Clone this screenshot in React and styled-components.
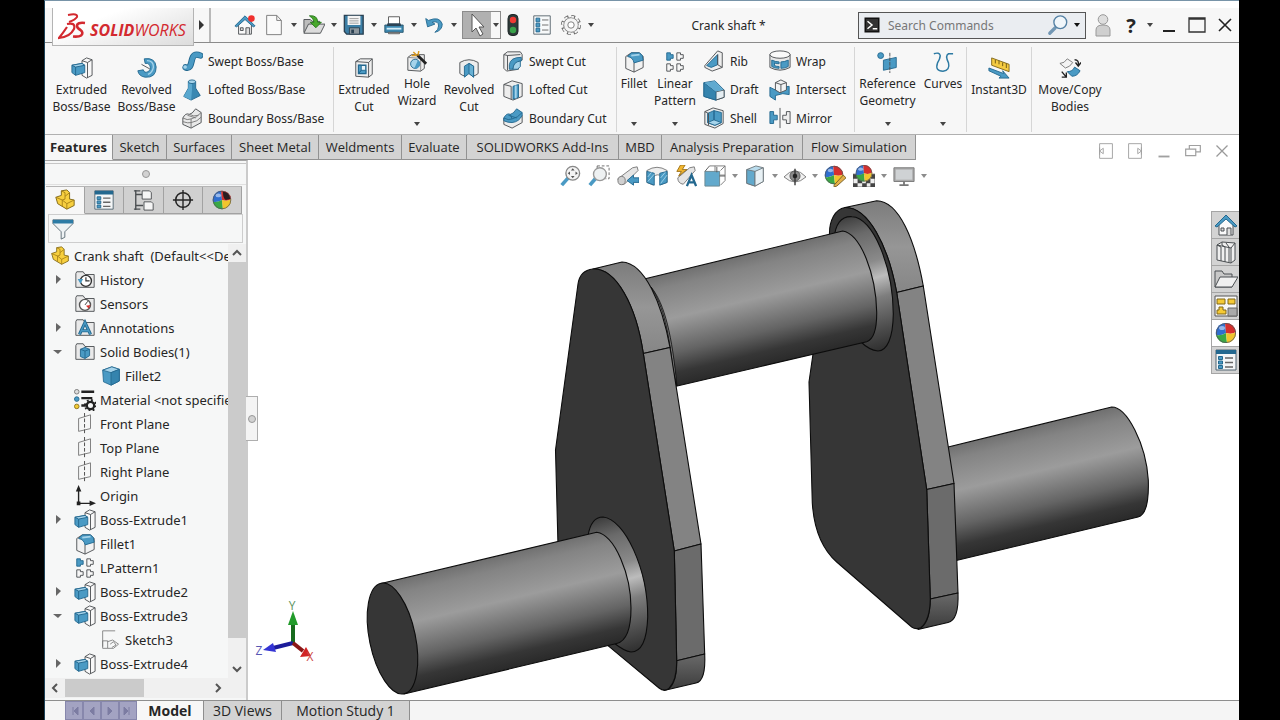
import React from "react";
import styled, { createGlobalStyle } from "styled-components";

const GlobalStyle = createGlobalStyle`
  * {
    box-sizing: border-box;
  }
  body {
    margin: 0;
    background: #000;
    color: #262626;
    font-family: "Noto Sans", "Open Sans", sans-serif;
    font-size: 13px;
  }
  button, input {
    font: inherit;
    color: inherit;
    margin: 0;
    padding: 0;
    border: 0;
    background: none;
  }
  h1, ul {
    margin: 0;
    padding: 0;
    font: inherit;
    list-style: none;
  }
`;

const Window = styled.div`
  display: flex;
  flex-direction: column;
  height: 100vh;
  margin: 0 41px 0 44px;
  background: #fff;
  border-top: 1px solid #7894a8;
  border-left: 1px solid #1d4258;
  overflow: hidden;
`;

const TitleBar = styled.header`
  display: flex;
  align-items: center;
  height: 35px;
  margin-top: 7px;
  background: #f7f7f7;
  border-bottom: 1px solid #8b8b8b;
  flex-shrink: 0;
`;

const Logo = styled.a`
  display: flex;
  align-items: center;
  align-self: flex-start;
  gap: 3px;
  width: 142px;
  height: 38px;
  margin-left: 7px;
  padding-left: 5px;
  background: linear-gradient(160deg, #fff 30%, #dcdcdc);
  border: 1px solid #b4b4b4;
  border-top: 0;
  color: #d3292f;
  text-decoration: none;
  z-index: 1;
`;

const LogoText = styled.span`
  font-family: "Open Sans", sans-serif;
  font-size: 16px;
  font-style: italic;
  line-height: 20px;
  margin-top: 6px;
`;

const MenuArrow = styled.button`
  display: flex;
  align-items: center;
  justify-content: center;
  width: 17px;
  height: 34px;
  border-right: 2px solid #b9b9b9;
`;

const QuickTools = styled.div`
  display: flex;
  align-items: center;
  margin-left: 22px;
`;

const ToolButton = styled.button`
  display: flex;
  align-items: center;
  justify-content: center;
  width: 24px;
  height: 24px;
  margin-right: ${(props) => props.$space || 0}px;
`;

const ArrowButton = styled.button`
  display: flex;
  align-items: center;
  justify-content: center;
  width: 16px;
  height: 24px;
`;

const SelectTool = styled.div`
  display: flex;
  width: 39px;
  height: 28px;
  border: 1px solid #8c8c8c;

  button {
    height: 26px;
  }
  button:first-child {
    width: 28px;
    background: #b1b1b1;
  }
  button:last-child {
    width: 9px;
  }
`;

const DocTitle = styled.h1`
  flex: 1;
  text-align: center;
  font-size: 12px;
`;

const Search = styled.label`
  display: flex;
  align-items: center;
  width: 228px;
  height: 27px;
  padding: 0 0 0 4px;
  background: #eaedf1;
  border: 1px solid #555;
  font-size: 12px;

  input {
    flex: 1;
    min-width: 0;
    margin-left: 7px;
    outline: 0;
  }
  input::placeholder {
    color: #777;
    opacity: 1;
  }
`;

const WindowControls = styled.div`
  display: flex;
  align-items: center;
  margin-left: 3px;
`;

const ControlButton = styled(ToolButton)`
  width: ${(props) => props.$width || 28}px;
  font-size: 20px;
  font-weight: 700;
`;

const Ribbon = styled.section`
  display: flex;
  height: 92px;
  flex-shrink: 0;
  background: #f7f7f7;
  border-bottom: 1px solid #b0b0b0;
  font-size: 12px;
`;

const RibbonGroup = styled.div`
  display: flex;
  margin: 4px 0 2px;
  padding-left: ${(props) => props.$indent || 0}px;
  border-right: ${(props) => (props.$last ? 0 : 1)}px solid #d6d6d6;
`;

const BigButton = styled.button`
  display: flex;
  flex-direction: column;
  align-items: center;
  width: ${(props) => props.$width}px;
  padding-top: ${(props) => (props.$menu ? 4 : 10)}px;
  line-height: 17px;
  white-space: nowrap;

  span {
    margin-top: 2px;
    white-space: pre-line;
  }
  > svg:last-child {
    margin: auto 0 6px;
  }
`;

const SmallColumn = styled.div`
  display: flex;
  flex-direction: column;
  justify-content: space-between;
  width: ${(props) => props.$width}px;
  padding-left: ${(props) => props.$indent}px;
`;

const SmallButton = styled.button`
  display: flex;
  align-items: center;
  gap: 5px;
  height: 28px;
  white-space: nowrap;
`;

const TabRow = styled.nav`
  display: flex;
  height: 25px;
  flex-shrink: 0;
`;

const Tab = styled.button`
  width: ${(props) => props.$width}px;
  height: 25px;
  background: ${(props) => (props.$active ? "#f7f7f7" : "#d3d3d3")};
  border-right: 1px solid #929292;
  border-bottom: 1px solid ${(props) => (props.$active ? "#f7f7f7" : "#929292")};
  font-family: "Open Sans", sans-serif;
  font-weight: ${(props) => (props.$active ? 700 : 400)};
  white-space: nowrap;
`;

const DocControls = styled.div`
  display: flex;
  align-items: center;
  gap: 5px;
  margin: 7px 5px 0 auto;
`;

const Work = styled.main`
  display: flex;
  flex: 1;
  min-height: 0;
`;

const Panel = styled.aside`
  display: flex;
  flex-direction: column;
  position: relative;
  width: 203px;
  flex-shrink: 0;
  background: #f6f7f7;
  border-top: 1px solid #a5a5a5;
  border-right: 2px solid #cbcbcb;
`;

const Grip = styled.div`
  display: flex;
  align-items: center;
  justify-content: center;
  height: 22px;
  margin-top: 2px;
  border-top: 1px solid #c6c6c6;
  border-bottom: 1px solid #e0e0e0;
`;

const Dot = styled.span`
  width: 8px;
  height: 8px;
  border: 1px solid #989898;
  border-radius: 50%;
  background: #d2d2d2;
`;

const PanelTabs = styled.div`
  display: flex;
  height: 28px;
  margin: 1px 4px 0 1px;
  border-top: 1px solid #b5b5b5;
`;

const PanelTab = styled.button`
  display: flex;
  flex: 1;
  align-items: center;
  justify-content: center;
  background: ${(props) => (props.$active ? "#f7f7f7" : "#d0d0d0")};
  border-right: 1px solid #a2a2a2;
  border-bottom: 1px solid ${(props) => (props.$active ? "#f7f7f7" : "#a2a2a2")};
`;

const Filter = styled.label`
  display: flex;
  align-items: center;
  height: 29px;
  margin: 0 3px 1px;
  padding-left: 3px;
  border: 1px solid #cdcdcd;

  input {
    flex: 1;
    min-width: 0;
    outline: 0;
  }
`;

const TreeArea = styled.div`
  display: flex;
  flex: 1;
  min-height: 0;
`;

const Tree = styled.ul`
  flex: 1;
  min-width: 0;
  overflow: hidden;
`;

const TreeRow = styled.li`
  display: flex;
  align-items: center;
  height: 24px;
  padding-left: ${(props) => [5, 7, 56][props.$level]}px;
  white-space: pre;

  > svg {
    flex-shrink: 0;
    margin-right: 4px;
  }
`;

const Expander = styled.button`
  display: flex;
  flex-shrink: 0;
  justify-content: center;
  width: 12px;
  margin-right: 10px;
  visibility: ${(props) => (props.$hidden ? "hidden" : "visible")};
`;

const VScroll = styled.div`
  display: flex;
  flex-direction: column;
  justify-content: space-between;
  width: 18px;
  background: #f0f0f0;

  button {
    display: flex;
    align-items: center;
    justify-content: center;
    height: 18px;
  }
`;

const VThumb = styled.div`
  flex: 1;
  margin-bottom: 22px;
  background: #cbcbcb;
`;

const HScroll = styled.div`
  display: flex;
  align-items: center;
  height: 20px;
  margin-bottom: 2px;
  padding-right: 18px;
  background: #f0f0f0;

  button {
    display: flex;
    align-items: center;
    justify-content: center;
    width: 20px;
    height: 20px;
  }
`;

const HThumb = styled.div`
  width: 79px;
  height: 18px;
  margin-right: auto;
  background: #cbcbcb;
`;

/* flyout handle that sits on the panel's outer edge */
const PanelHandle = styled.button`
  display: flex;
  align-items: center;
  justify-content: center;
  position: absolute;
  top: 235px;
  right: -12px;
  width: 12px;
  height: 45px;
  background: #f4f4f4;
  border: 1px solid #aeaeae;
  border-left: 0;
  z-index: 1;
`;

const Viewport = styled.section`
  position: relative;
  flex: 1;
  min-width: 0;

  > svg {
    display: block;
    width: 100%;
    height: 100%;
  }
`;

const HeadsUp = styled.div`
  position: absolute;
  top: 4px;
  left: 0;
  right: 0;
  display: flex;
  justify-content: center;
  padding-left: 2px;
`;

const TaskPane = styled.div`
  position: absolute;
  top: 51px;
  right: 0;
  width: 28px;
  border: 1px solid #a5a5a5;
  border-width: 1px 0 0 1px;
`;

const TaskButton = styled.button`
  display: flex;
  align-items: center;
  justify-content: center;
  width: 27px;
  height: 27px;
  background: ${(props) => (props.$active ? "#fff" : "#d3d3d3")};
  border-bottom: 1px solid #a5a5a5;
`;

const BottomBar = styled.footer`
  display: flex;
  height: 20px;
  flex-shrink: 0;
  background: #f5f5f5;
  border-top: 1px solid #8e8e8e;
`;

const NavButtons = styled.div`
  display: flex;
  margin-left: 20px;

  button {
    display: flex;
    align-items: center;
    justify-content: center;
    width: 18px;
    background: #a3a3c2;
    border: 1px solid #8787ac;
  }
`;

const SheetTab = styled.button`
  width: ${(props) => props.$width}px;
  background: ${(props) => (props.$active ? "#f7f7f7" : "#d3d3d3")};
  border-right: 1px solid #8e8e8e;
  font-family: "Open Sans", sans-serif;
  font-size: 14px;
  line-height: 19px;
  font-weight: ${(props) => (props.$active ? 700 : 400)};
  white-space: nowrap;
`;

const line = "#4b4f52";
const blue = "#4a9ac4";
const deep = "#23688f";
const pale = "#a5d3ea";

const Ball = ({ x = 12, y = 12, r = 10 }) => (
  <g transform={`translate(${x} ${y}) scale(${r / 10})`} stroke="none">
    <path d="M0 0L-1-10A10 10 0 0 0-10 2Q-5 3 0 0z" fill="#2f6fd0" />
    <path d="M0 0L-1-10A10 10 0 0 1 10-1Q6 2 0 0z" fill="#d5302e" />
    <path d="M0 0Q-5 3-10 2A10 10 0 0 0 1 10z" fill="#3aa845" />
    <path d="M0 0Q6 2 10-1A10 10 0 0 1 1 10z" fill="#f2c52c" />
    <circle r="9.6" fill="none" stroke="#555" strokeWidth=".8" />
    <ellipse cx="-4" cy="-5" rx="3" ry="2" fill="#fff" opacity=".5" />
  </g>
);

const Folder = ({ children }) => (
  <>
    <path d="M2 5V20H22V6H12L10 3H3z" fill="#e9e9e9" stroke={line} />
    {children}
  </>
);

const House = () => (
  <>
    <path d="M5 11V22H19V11L12 4z" fill="#fafafa" stroke={line} />
    <path d="M13 22V15H17V22M7 15h3v3H7z" fill="#ddd" stroke={line} />
    <path d="M1 13L12 2L23 13L21 14L12 6L3 14z" fill={blue} stroke={deep} />
  </>
);

const pictures = {
  home: <House />,
  homeAlert: (
    <>
      <House />
      <circle cx="19" cy="5" r="3.6" fill="#f0302e" />
    </>
  ),
  file: (
    <path d="M4 1.500H15L20 7V22.500H4zM15 1.500V7H20" fill="#fafafa" stroke="#777" />
  ),
  open: (
    <>
      <path d="M1 6H8L10 8H18V20H1z" fill="#bdbdbd" stroke={line} />
      <path d="M1 21L6 11H24L19 21z" fill="#dcdcdc" stroke={line} />
      <path d="M7 2Q16 1 16 9H20L14 15L8 9H12Q12 5 7 2z" fill="#48a82c" stroke="#25761a" />
    </>
  ),
  save: (
    <>
      <path d="M1.500 1.500H22V22H4L1.500 19z" fill="#3c7fa6" stroke="#2b4253" strokeWidth="1.500" />
      <path d="M5 2H19V12H5z" fill="#f4f4f4" />
      <path d="M7 5h10M7 7.500h10M7 10h10" stroke="#999" />
      <path d="M7 15H18V22H7z" fill="#8d979e" stroke="#2b4253" />
      <path d="M9 17h3v4H9z" fill="#2b4253" />
    </>
  ),
  print: (
    <>
      <path d="M6 3H18V12H6z" fill="#fff" stroke="#555" />
      <path d="M2 12H22V20H2z" fill="#3d89b1" stroke="#29566e" />
      <path d="M5 10H19L20 13H4z" fill="#2c4456" />
      <path d="M4 16H20" stroke="#d5edf8" strokeWidth="2" />
      <path d="M6 20H18V21.500H6z" fill="#eee" stroke="#555" />
    </>
  ),
  undo: (
    <path
      d="M3 5L5 14L13 11L10 9Q17 7 17 13Q17 17 13 20Q21 18 21 11Q18 2 6 7z"
      fill={blue}
      stroke={deep}
    />
  ),
  cursor: <path d="M7 1V19L11 15L15 23L18 21L14 14H19z" fill="#fff" stroke="#555" />,
  signal: (
    <>
      <rect x="7" y="1.500" width="10" height="21" rx="4" fill="#2f3b3a" stroke="#1f2928" />
      <circle cx="12" cy="7" r="3.200" fill="#f03b34" />
      <circle cx="12" cy="17" r="3.200" fill="#39a34a" />
    </>
  ),
  options: (
    <>
      <path d="M3 2H21V22H3z" fill="#f7f9fa" stroke="#57646c" />
      <path d="M5.500 4.500h4v4h-4zM5.500 10h4v4h-4zM5.500 15.500h4v4h-4z" fill={blue} stroke={deep} />
      <path d="M12 6.500h7M12 12h7M12 17.500h7" stroke="#666" />
    </>
  ),
  gear: (
    <>
      <circle cx="12" cy="12" r="9.500" fill="none" stroke="#666" strokeWidth="3" strokeDasharray="4.300 3.160" />
      <circle cx="12" cy="12" r="8" fill="#f5f5f5" stroke="#777" />
      <circle cx="12" cy="12" r="9.200" fill="none" stroke="#f5f5f5" strokeWidth="2" strokeDasharray="3 4.230" />
      <circle cx="12" cy="12" r="3.500" fill="#fff" stroke="#777" />
    </>
  ),
  terminal: (
    <>
      <path d="M3 3H21V21H3z" fill="#333" stroke="#111" strokeWidth="2" />
      <path d="M6 7L12 12L6 17M13 17H19" fill="none" stroke="#fff" strokeWidth="2" />
    </>
  ),
  search: (
    <>
      <path d="M9 15L3 21" stroke="#7297b4" strokeWidth="3.500" strokeLinecap="round" />
      <circle cx="14.500" cy="9" r="7" fill="#f0f6fa" stroke="#5481a4" strokeWidth="1.500" />
    </>
  ),
  user: (
    <>
      <path d="M5 23V17Q5 12 12 12Q19 12 19 17V23z" fill="#cfcfcf" stroke="#999" />
      <circle cx="12" cy="6.500" r="4.800" fill="#dedede" stroke="#999" />
    </>
  ),
  minimize: <path d="M6 18H18" stroke="#222" strokeWidth="2" />,
  maximize: <path d="M4 5H20V19H4zM4 6H20" fill="none" stroke="#333" strokeWidth="1.300" />,
  close: <path d="M6 6L18 18M18 6L6 18" stroke="#222" strokeWidth="1.600" />,
  boss: (
    <>
      <path d="M12 4L17 1L23 3V20L17 23L12 20z" fill="#f8f8f8" stroke={line} />
      <path d="M12 4L18 6V22.500M18 6L23 3" fill="none" stroke={line} />
      <path d="M1 9L12 7L15 9V17L5 20L1 17z" fill={blue} stroke={deep} />
      <path d="M1 9L5 11L15 9L12 7z" fill={pale} stroke={deep} />
      <path d="M5 11V20" stroke={deep} />
    </>
  ),
  revolve: (
    <>
      <path d="M9 2Q21 0 22 11Q22 23 10 22Q3 21 2 15L8 14Q9 18 13 16Q17 14 15 9Q13 6 10 7z" fill={blue} stroke={deep} />
      <path d="M12 4Q19 4 19 11Q18 17 13 19" fill="none" stroke={pale} strokeWidth="1.500" />
      <path d="M6 8L15 13" stroke={line} />
    </>
  ),
  sweep: (
    <>
      <path
        d="M5 19C14 22 9 5 17 5Q19 5 21 6"
        fill="none"
        stroke={deep}
        strokeWidth="7"
        strokeLinecap="round"
      />
      <path
        d="M5 19C14 22 9 5 17 5Q19 5 21 6"
        fill="none"
        stroke={blue}
        strokeWidth="5"
        strokeLinecap="round"
      />
      <circle cx="4.500" cy="18.500" r="2" fill={pale} />
    </>
  ),
  loft: (
    <>
      <path d="M8 3V10L3 19L11 23L21 18L16 10V3z" fill="#3a88b2" stroke={deep} />
      <path d="M8 4V10L3 19L11 23L12 12V5z" fill="#5aa8cf" />
      <ellipse cx="12" cy="3" rx="4" ry="2" fill={pale} stroke={deep} />
    </>
  ),
  boundary: (
    <>
      <path d="M2 12Q5 6 9 8Q12 8 16 2L22 6V17L11 23L2 19z" fill="#e9e9e9" stroke={line} />
      <path d="M2 12Q7 15 11 13Q17 12 22 6M11 13V23M2 16Q8 18 11 17Q18 16 22 11M7 9L16 12M9 8Q14 11 19 9" fill="none" stroke="#777" />
    </>
  ),
  extrudeCut: (
    <>
      <path d="M3 5L8 2H21V19L17 22L3 21z" fill="#efefef" stroke={line} />
      <path d="M3 5L17 6V22M17 6L21 2" fill="none" stroke={line} />
      <path d="M6 9H14V18H6z" fill="#e8f4fa" stroke={deep} strokeWidth="1.500" />
      <path d="M6 18L9 14.500V9H6zM9 14.500H14V18H6z" fill={blue} stroke={deep} />
    </>
  ),
  hole: (
    <>
      <path d="M2 7L6 4H20V19L16 22L2 21z" fill="#ececec" stroke={line} />
      <path d="M2 7L16 8V22" fill="none" stroke="#888" />
      <circle cx="10" cy="14" r="5" fill={pale} stroke={deep} />
      <path d="M13 10A5 5 0 0 1 9 19z" fill={blue} />
      <path d="M12 4L22 14" stroke="#222" strokeWidth="3" />
      <path d="M8 1L12 5M14 0L13 5M6 5H11" stroke="#d99a20" strokeWidth="1.600" />
    </>
  ),
  revolveCut: (
    <>
      <path d="M2 6Q12 0 22 6V18Q20 20 16 21L12 15L8 21Q4 20 2 18z" fill="#ededed" stroke={line} />
      <path d="M12 7L7 10V22L12 18L17 22V10z" fill={blue} stroke={deep} />
      <path d="M12 7V18L17 22V10z" fill="#69b1d4" stroke={deep} />
    </>
  ),
  sweepCut: (
    <>
      <path d="M2 5L6 2H20L22 5V11L18 12V21L5 23L2 20z" fill="#ededed" stroke={line} />
      <path d="M2 5L6 6V22M6 6L20 5" fill="none" stroke={line} />
      <path d="M8 21V16Q9 8 21 8V12Q13 12 12 21z" fill={blue} stroke={deep} />
      <path d="M12 21Q12 13 20 12V18L17 21z" fill={pale} stroke={deep} />
    </>
  ),
  loftCut: (
    <>
      <path d="M2 6L11 2L22 5V19L12 23L2 19z" fill="#ededed" stroke={line} />
      <path d="M2 6L10 8V22" fill="none" stroke={line} />
      <path d="M12 8L18 6V20L12 22z" fill={blue} stroke={deep} />
      <path d="M15 7V21" stroke={pale} strokeWidth="2" />
    </>
  ),
  boundaryCut: (
    <>
      <path d="M2 12L22 9V17L11 23L2 19z" fill="#ededed" stroke={line} />
      <path d="M2 12Q5 6 9 8Q12 8 16 2L22 6V9Q19 16 11 17Q6 17 2 15z" fill={blue} stroke={deep} />
      <path d="M2 12Q7 15 11 13Q17 12 22 6M7 9L16 12M9 8L11 13" fill="none" stroke={deep} />
    </>
  ),
  fillet: (
    <>
      <path d="M3 6L9 2H18L22 6V18L12 23L3 19z" fill="#f2f2f2" stroke={line} />
      <path d="M5 6L9 2H18Q22 4 22 10L12 13Q11 7 5 6z" fill={blue} stroke={deep} />
      <path d="M12 13V23" stroke={line} />
      <path d="M9 5L18 4" stroke={pale} strokeWidth="2" />
    </>
  ),
  pattern: (
    <>
      <path d="M3 2H7V4H10V8H7V10H3z" fill={blue} stroke={deep} />
      <path
        d="M14 2H18V4H21V8H18V10H14zM3 14H7V16H10V20H7V22H3zM14 14H18V16H21V20H18V22H14z"
        fill="#f7f7f7"
        stroke={line}
      />
    </>
  ),
  rib: (
    <>
      <path d="M2 17L16 1L21 3V19L10 23L2 19z" fill="#eee" stroke={line} />
      <path d="M4 17L16 5V16L9 19z" fill={blue} stroke={deep} />
      <path d="M16 5V16L21 19" fill="none" stroke={line} />
    </>
  ),
  draft: (
    <>
      <path d="M1 4L13 2L23 12V20L14 23L1 19z" fill={pale} stroke={deep} />
      <path d="M14 14L23 12V20L14 23z" fill="#e5eef3" stroke={line} />
      <path d="M1 4L14 14V23L1 19z" fill="#3584ae" stroke={deep} />
      <path d="M2 4L13 2.500L22 12L14 13.500z" fill="#60aad0" />
    </>
  ),
  shell: (
    <>
      <path d="M2 5L11 1L22 4V18L13 23L2 19z" fill="#ededed" stroke={line} />
      <path d="M5 7L12 4L20 6V17L13 20L5 17z" fill={blue} stroke={deep} />
      <path d="M12 4V14L20 17L13 20L5 17L12 14z" fill={pale} stroke={deep} />
      <path d="M2 5L6 7V20" fill="none" stroke={line} />
    </>
  ),
  wrap: (
    <>
      <path d="M1 5V19Q12 25 23 19V5z" fill="#e8e8e8" stroke={line} />
      <ellipse cx="12" cy="5" rx="11" ry="4" fill="#fafafa" stroke={line} />
      <path d="M3 11Q7 13 11 13V15Q7 15 6 14V17Q8 18 11 18V20Q6 20 3 18zM21 11Q17 13 13 13V20Q18 20 21 18z" fill={blue} stroke={deep} />
    </>
  ),
  intersect: (
    <>
      <path d="M1 9L7 12L14 9L22 8V17L15 16L7 18V23L1 19z" fill={blue} stroke={deep} />
      <path d="M7 4L13 1L19 4V12L12 15L7 12z" fill="#f3f3f3" stroke={line} />
      <path d="M7 4L13 6L19 4M13 6V14" fill="none" stroke={line} />
    </>
  ),
  mirror: (
    <>
      <path d="M1 5H5V9H9V14H5V18H1z" fill={blue} stroke={deep} />
      <path d="M23 5H19V9H15V14H19V18H23z" fill="#eee" stroke={line} />
      <path d="M12 1V23" stroke={line} />
    </>
  ),
  reference: (
    <>
      <path d="M7 10L21 7V18L7 21z" fill={blue} stroke={deep} />
      <path d="M14 2V24" stroke={line} strokeDasharray="4 1" />
      <circle cx="4" cy="5" r="3.200" fill={blue} stroke={deep} />
    </>
  ),
  curves: (
    <path
      d="M2 3Q8 1 9 5Q9 8 6 13Q3 22 12 22Q20 21 18 13Q14 5 18 3H23"
      fill="none"
      stroke="#2d7aa3"
      strokeWidth="1.600"
    />
  ),
  instant: (
    <>
      <path d="M4 1L23 8V16L4 9z" fill="#f5cb42" stroke="#806618" />
      <path d="M8 3V7M12 4V8M16 6V10M20 7V12" stroke="#6a5413" />
      <path d="M1 12L17 18L16 15L23 23L12 23L14 21L1 15z" fill={blue} stroke={deep} />
    </>
  ),
  move: (
    <>
      <path d="M1 7Q6 7 9 2L15 6Q12 11 7 12z" fill="#f3f3f3" stroke="#777" />
      <path d="M9 16Q15 16 17 11L23 15Q20 21 14 21z" fill={blue} stroke={deep} />
      <path d="M17 3Q22 3 21 9M18 6L21 10L24 6M3 16L8 22M8 17V22H3" fill="none" stroke="#222" strokeWidth="1.500" />
    </>
  ),
  part: (
    <>
      <path d="M2 9L8 7V2L14 1L17 4V11L22 12V18L14 22L4 16z" fill="#f7cf3f" stroke="#7d6414" />
      <path d="M2 9L9 12L12 11V8L17 4M9 12V19M8 2L12 4V8M14 22V16L22 12M9 12L14 16" fill="none" stroke="#a68118" />
    </>
  ),
  property: (
    <>
      <path d="M2 2H22V22H2z" fill="#f4f6f7" stroke="#526471" />
      <path d="M2 2H22V6H2z" fill={deep} />
      <path d="M4.500 8.500h4v3h-4zM4.500 13h4v3h-4zM4.500 17.500h4v3h-4z" fill={blue} stroke={deep} />
      <path d="M11 10H19M11 14.500H19M11 19H19" stroke="#666" strokeWidth="1.500" />
    </>
  ),
  config: (
    <>
      <path d="M3 1V23M3 6H10M3 18H11M1 2H8M1 22H8" fill="none" stroke={line} strokeWidth="1.500" />
      <path d="M10 2H18L20 4V11H10zM12 14H20L22 16V23H12z" fill="#f5f5f5" stroke={line} />
    </>
  ),
  target: (
    <>
      <circle cx="12" cy="12" r="8" fill="none" stroke="#252525" strokeWidth="1.700" />
      <path d="M12 1V23M1 12H23" stroke="#252525" strokeWidth="1.500" />
    </>
  ),
  ball: <Ball />,
  darkBall: (
    <>
      <Ball />
      <path d="M13 3Q20 3 21 11L16 12Q13 10 13 3z" fill="#2a1d20" />
    </>
  ),
  funnel: (
    <>
      <path d="M1 2H23V6L14 15V21L10 23V15L1 6z" fill="#eef2f4" stroke="#5a6a74" />
      <path d="M1 2H23V6H1z" fill="#2c7ba5" />
    </>
  ),
  history: (
    <Folder>
      <circle cx="13" cy="13" r="6" fill="#fff" stroke="#333" strokeWidth="1.500" />
      <path d="M13 9V13H17" fill="none" stroke="#333" strokeWidth="1.300" />
      <path d="M4 11L10 11L7 16z" fill={blue} />
    </Folder>
  ),
  sensor: (
    <Folder>
      <circle cx="12" cy="13" r="6" fill="#fff" stroke="#555" strokeWidth="1.500" />
      <path d="M12 13L15 9" stroke="#333" />
      <path d="M13 14L18 13L16 17z" fill="#d8322d" />
    </Folder>
  ),
  annotation: (
    <Folder>
      <path d="M6 19L12 6L18 19M8 15H16" fill="none" stroke={deep} strokeWidth="3.500" />
      <path d="M6 19L12 6L18 19M8 15H16" fill="none" stroke={blue} strokeWidth="1.500" />
    </Folder>
  ),
  bodies: (
    <Folder>
      <path d="M7 9L12 7L17 9V16L12 19L7 17z" fill={blue} stroke={deep} />
      <path d="M7 9L12 11L17 9M12 11V19" fill="none" stroke={deep} />
    </Folder>
  ),
  cube: (
    <>
      <path d="M2 5L13 1L22 4V18L12 23L3 19z" fill={blue} stroke={deep} />
      <path d="M2 5L13 1L22 4L12 8z" fill={pale} stroke={deep} />
      <path d="M12 8L22 4V18L12 23z" fill="#3584ae" stroke={deep} />
    </>
  ),
  material: (
    <>
      <path d="M8 3H22M8 10H20M8 18H13" stroke="#222" strokeWidth="2.500" />
      <circle cx="3" cy="3" r="2.500" fill="#ddd" stroke="#777" />
      <circle cx="3" cy="11" r="2.500" fill={blue} stroke={deep} />
      <circle cx="3" cy="19" r="2.500" fill="#f2cb35" stroke="#8d721a" />
      <circle cx="18" cy="18" r="4" fill="none" stroke="#222" strokeWidth="2.500" />
      <circle cx="18" cy="18" r="6" fill="none" stroke="#222" strokeWidth="2" strokeDasharray="2 2.700" />
    </>
  ),
  plane: (
    <>
      <path d="M5 6L18 2V17L5 20z" fill="none" stroke="#777" />
      <path d="M11.500 0V24" stroke="#444" strokeDasharray="4 2" />
    </>
  ),
  origin: (
    <>
      <path d="M5 5V20H19" fill="none" stroke="#222" strokeWidth="1.500" />
      <path d="M2 7L5 0L8 7zM17 17L24 20L17 23zM3 18H7V22H3z" fill="#222" />
    </>
  ),
  sketch: (
    <path
      d="M2 20V1H17M2 13V22H8V13H2M8 14L14 12L21 17L15 22H8M11 17L15 14L18 18L13 21"
      fill="none"
      stroke="#777"
    />
  ),
  zoomFit: (
    <>
      <path d="M10 14L3 22" stroke={blue} strokeWidth="4" />
      <circle cx="15" cy="9" r="7.500" fill="#f3f3f3" stroke="#888" strokeWidth="1.500" />
      <path d="M15 3.500L17 6H13zM15 14.500L13 12H17zM9.500 9L12 7V11zM20.500 9L18 11V7z" fill="#555" />
    </>
  ),
  zoomArea: (
    <>
      <path d="M10 1H23V15H19M10 1V4" fill="none" stroke="#666" strokeDasharray="3 2" />
      <path d="M8 15L2 22" stroke={blue} strokeWidth="4" />
      <circle cx="13" cy="10" r="7" fill="#eef1f2" stroke="#999" strokeWidth="1.500" />
    </>
  ),
  previous: (
    <>
      <path d="M1 15L17 3L22 2L23 6L8 21Q2 21 1 15z" fill="#e5e5e5" stroke="#777" />
      <ellipse cx="5" cy="17" rx="4" ry="4.500" fill="#d0d0d0" stroke="#777" />
      <path d="M24 14H18V11L11 17L18 22V19H24z" fill={blue} stroke={deep} />
    </>
  ),
  section: (
    <>
      <path d="M1 6Q12 -1 23 6V19L17 21V12Q12 9 8 13V22L1 19z" fill="#eee" stroke="#777" />
      <path d="M1 7L9 9V22L1 19zM15 9L23 7V19L15 22z" fill={blue} stroke={deep} />
      <path d="M2 18L9 10M2 13L6 8M16 20L23 11M16 14L21 8" stroke={pale} />
    </>
  ),
  annotationView: (
    <>
      <path d="M3 14L16 3L21 2L22 6L9 21Q3 20 3 14z" fill="#e5e5e5" stroke="#777" />
      <path d="M6 0L2 7H7L4 12L13 5H8L11 0z" fill="#f2b730" stroke="#9b7016" />
      <path d="M13 23L18 11L23 23M15 19H22" fill="none" stroke={deep} strokeWidth="2.500" />
    </>
  ),
  orient: (
    <>
      <path d="M6 1H23V17L18 22M23 1L18 6M12 1V11H23" fill="none" stroke="#777" />
      <path d="M1 7H17V23H1z" fill="#62a9cc" stroke="#6a858f" />
      <path d="M1 7L6 1M14 2V8M17 12H23" stroke="#555" />
    </>
  ),
  display: (
    <>
      <path d="M3 5L13 1L21 3V18L12 23L3 20z" fill="#b9dced" stroke="#6d767b" />
      <path d="M3 5L12 7V23L3 20z" fill="#62a9cc" stroke="#6d767b" />
      <path d="M12 7L21 3V18L12 23z" fill="#e8f1f5" stroke="#6d767b" />
    </>
  ),
  eye: (
    <>
      <path d="M0 13Q12 0 24 13Q12 24 0 13z" fill="#f0f0f0" stroke="#777" />
      <circle cx="12" cy="12" r="5.500" fill="#8a8a8a" stroke="#555" />
      <path d="M12 4V22" stroke="#333" strokeWidth="1.500" />
      <circle cx="12" cy="12" r="2.500" fill="#222" />
    </>
  ),
  appearance: (
    <>
      <Ball x={11} y={11} r={10} />
      <path d="M11 22L21 11L24 14L14 23L11 24z" fill="#e3b04a" stroke="#755d25" />
    </>
  ),
  scene: (
    <>
      <path d="M0 10H24V24H0z" fill="#eee" stroke="#666" />
      <path d="M0 10h5v5H0zM5 15h5v5H5zM14 15h5v5h-5zM19 10h5v5h-5zM0 20h5v4H0zM10 20h5v4h-5zM19 20h5v4h-5z" fill="#444" />
      <Ball x={12} y={9} r={9} />
    </>
  ),
  monitor: (
    <>
      <path d="M1 3H23V18H1z" fill="#aaa" stroke="#777" />
      <path d="M3 5H21V16H3z" fill="#cfd2d4" />
      <path d="M12 18V22M7 22H17" stroke="#777" strokeWidth="2" />
    </>
  ),
  library: (
    <>
      <path d="M3 5L8 2L21 3V20L17 23L3 20z" fill="#efefef" stroke={line} />
      <path d="M3 5L7 7V21M8 2V5L11 7V22M12 3L15 7V22M3 5L17 8V23M17 8L21 3" fill="none" stroke={line} />
    </>
  ),
  folder: (
    <>
      <path d="M1 4H8L10 7H18V20H1z" fill="#c8c8c8" stroke={line} />
      <path d="M1 20L6 10H24L18 20z" fill="#f0f0f0" stroke={line} />
    </>
  ),
  palette: (
    <>
      <path d="M1 2H23V22H1z" fill="#f7f7f7" stroke="#555" />
      <path d="M3 5H11V10H3zM14 5H21V10H14zM5 13H9V16H12V20H3V16H5z" fill="#f5ca35" stroke="#806618" />
      <path d="M14 14H23V22H14z" fill="#aaa" stroke="#666" />
    </>
  ),
  dockLeft: <path d="M5 4H19V20H5zM5 12L9 9V15zM5 8V16" fill="none" stroke="#a0a0a0" />,
  dockRight: <path d="M5 4H19V20H5zM19 12L15 9V15zM19 8V16" fill="none" stroke="#a0a0a0" />,
  docMinimize: <path d="M6 18H18" stroke="#a0a0a0" strokeWidth="2" />,
  restore: <path d="M4 10H15V17H4zM8 10V6H20V13H15" fill="none" stroke="#a0a0a0" strokeWidth="1.300" />,
  docClose: <path d="M6 6L18 18M18 6L6 18" stroke="#999" strokeWidth="1.400" />,
};

const Icon = ({ name, size = 24 }) => (
  <svg width={size} height={size} viewBox="0 0 24 24" fill="none" aria-hidden="true">
    {pictures[name]}
  </svg>
);

const Caret = ({ color = "#444" }) => (
  <svg width="6" height="4" viewBox="0 0 6 4" aria-hidden="true">
    <path d="M0 0H6L3 4z" fill={color} />
  </svg>
);

const quickTools = [
  ["file", "New"],
  ["open", "Open"],
  ["save", "Save"],
  ["print", "Print"],
  ["undo", "Undo"],
];

const tabs = [
  ["Features", 68],
  ["Sketch", 54],
  ["Surfaces", 65],
  ["Sheet Metal", 87],
  ["Weldments", 83],
  ["Evaluate", 65],
  ["SOLIDWORKS Add-Ins", 152],
  ["MBD", 43],
  ["Analysis Preparation", 141],
  ["Flow Simulation", 113],
];

const treeItems = [
  { icon: "part", text: "Crank shaft  (Default<<De", level: 0 },
  { icon: "history", text: "History", level: 1, toggle: "closed" },
  { icon: "sensor", text: "Sensors", level: 1 },
  { icon: "annotation", text: "Annotations", level: 1, toggle: "closed" },
  { icon: "bodies", text: "Solid Bodies(1)", level: 1, toggle: "open" },
  { icon: "cube", text: "Fillet2", level: 2 },
  { icon: "material", text: "Material <not specifie", level: 1 },
  { icon: "plane", text: "Front Plane", level: 1 },
  { icon: "plane", text: "Top Plane", level: 1 },
  { icon: "plane", text: "Right Plane", level: 1 },
  { icon: "origin", text: "Origin", level: 1 },
  { icon: "boss", text: "Boss-Extrude1", level: 1, toggle: "closed" },
  { icon: "fillet", text: "Fillet1", level: 1 },
  { icon: "pattern", text: "LPattern1", level: 1 },
  { icon: "boss", text: "Boss-Extrude2", level: 1, toggle: "closed" },
  { icon: "boss", text: "Boss-Extrude3", level: 1, toggle: "open" },
  { icon: "sketch", text: "Sketch3", level: 2 },
  { icon: "boss", text: "Boss-Extrude4", level: 1, toggle: "closed" },
];

const viewTools = [
  ["zoomFit", "Zoom to Fit"],
  ["zoomArea", "Zoom to Area"],
  ["previous", "Previous View"],
  ["section", "Section View"],
  ["annotationView", "Dynamic Annotation Views"],
  ["orient", "View Orientation", true],
  ["display", "Display Style", true],
  ["eye", "Hide/Show Items", true],
  ["appearance", "Edit Appearance"],
  ["scene", "Apply Scene", true],
  ["monitor", "View Settings", true],
];

const taskTools = [
  ["home", "Resources"],
  ["library", "Design Library"],
  ["folder", "File Explorer"],
  ["palette", "View Palette"],
  ["ball", "Appearances"],
  ["property", "Custom Properties"],
];

const docTools = [
  ["dockLeft", "Dock left"],
  ["dockRight", "Dock right"],
  ["docMinimize", "Minimize document"],
  ["restore", "Restore document"],
  ["docClose", "Close document"],
];

const Big = ({ icon, width, menu, children }) => (
  <BigButton $width={width} $menu={menu}>
    <Icon name={icon} size={22} />
    <span>{children}</span>
    {menu && <Caret />}
  </BigButton>
);

const Small = ({ width, indent, items }) => (
  <SmallColumn $width={width} $indent={indent}>
    {items.map(([icon, text]) => (
      <SmallButton key={text}>
        <Icon name={icon} size={22} />
        {text}
      </SmallButton>
    ))}
  </SmallColumn>
);

const shaftStops = (
  <>
    <stop offset="0" stopColor="#707070" />
    <stop offset=".12" stopColor="#848484" />
    <stop offset=".4" stopColor="#9c9c9c" />
    <stop offset=".46" stopColor="#919191" />
    <stop offset=".7" stopColor="#646464" />
    <stop offset=".88" stopColor="#363636" />
    <stop offset="1" stopColor="#2a2a2a" />
  </>
);

const filletStops = (
  <>
    <stop offset="0" stopColor="#3c3c3c" />
    <stop offset=".15" stopColor="#6a6a6a" />
    <stop offset=".36" stopColor="#8a8a8a" />
    <stop offset=".48" stopColor="#bcbcbc" />
    <stop offset=".62" stopColor="#7e7e7e" />
    <stop offset=".85" stopColor="#4a4a4a" />
    <stop offset="1" stopColor="#2c2c2c" />
  </>
);

const Model = () => (
  <svg viewBox="248 160 991 540" role="img" aria-label="Crank shaft model">
    <defs>
      <linearGradient id="shaftA" gradientUnits="userSpaceOnUse" x1="480" y1="560" x2="506" y2="669">
        {shaftStops}
      </linearGradient>
      <linearGradient id="shaftB" gradientUnits="userSpaceOnUse" x1="740" y1="256" x2="766" y2="365">
        {shaftStops}
      </linearGradient>
      <linearGradient id="shaftC" gradientUnits="userSpaceOnUse" x1="1030" y1="427" x2="1056" y2="536">
        {shaftStops}
      </linearGradient>
      <linearGradient id="filletA" gradientUnits="userSpaceOnUse" x1="600" y1="517" x2="640" y2="652">
        {filletStops}
      </linearGradient>
      <linearGradient id="filletB" gradientUnits="userSpaceOnUse" x1="846" y1="216" x2="886" y2="351">
        {filletStops}
      </linearGradient>
      <linearGradient id="cap" x1="0" y1="0" x2="0" y2="1">
        <stop offset="0" stopColor="#7c7c7c" />
        <stop offset=".5" stopColor="#969696" />
        <stop offset="1" stopColor="#868686" />
      </linearGradient>
      <linearGradient id="foot" x1="0" y1="0" x2="0" y2="1">
        <stop offset="0" stopColor="#6a6a6a" />
        <stop offset="1" stopColor="#3b3b3b" />
      </linearGradient>
    </defs>
    <g stroke="#0c0c0c" strokeWidth="1.100" strokeLinejoin="round">
      <path
        d="M940 449L1111.700 407C1127 407 1146 444 1148.300 480C1149 502 1146 515 1138 517L950 562z"
        fill="url(#shaftC)"
      />
      <path
        d="M845 207.500L876.700 200.700C899 201 915 240 923.300 286L896.700 292.500C888 245 868 207 845 207.500z"
        fill="url(#cap)"
      />
      <path d="M896.700 292.500L923.300 286L954 483.500L926.700 489.500z" fill="#838383" />
      <path d="M926.700 489.500L954 483.500L958 593L930.300 599z" fill="#6b6b6b" />
      <path d="M930.300 599L958 593Q959 620 948 622.500L918 629.500Q930 625 930.300 599z" fill="url(#foot)" />
      <path
        d="M845 207.500C835 209 829 221 829.500 235L813 354L809 382L812.300 503C814 529 822 549 836.700 562L911.700 627Q916 630 921 627.500Q930 620 930.300 599L926.700 489.500L896.700 292.500C888 245 868 207 845 207.500z"
        fill="#363636"
      />
      <path
        d="M834 240C835 224 841 216 852 216.700C873 217 893 267 893.300 314C893 338 887 351 878 351Q869 350 861 342z"
        fill="url(#filletB)"
      />
      <path
        d="M640 280L842.700 231C861 234 876 275 876.700 312Q877 338 866.700 341.700L660 390z"
        fill="url(#shaftB)"
      />
      <path d="M651 287C665 304 672 336 677 386L673 370C669 334 664 307 651 287z" fill="#777" strokeWidth=".8" />
      <path
        d="M593 269L622 262C645 263 662 304 670 347.500L643.300 353.500C636 305 616 268 593 269z"
        fill="url(#cap)"
      />
      <path d="M643.300 353.500L670 347.500L701 544L674.300 551z" fill="#838383" />
      <path d="M674.300 551L701 544L704.700 654L676.700 660.700z" fill="#6b6b6b" />
      <path d="M676.700 660.700L704.700 654Q706 681 696 683L664 690.500Q677 688 676.700 660.700z" fill="url(#foot)" />
      <path
        d="M593 269C583 270 579 277 578 284L555.500 450L558 545L566 610L608 645.700L659 688Q664 692 669 688.500Q677 680 676.700 660.700L674.300 551L643.300 353.500C636 305 616 268 593 269z"
        fill="#363636"
      />
      <path
        d="M588 536C590 523 595 517 603 517C625 519 648 570 647.700 617C647 639 642 652 631 652Q624 651 614 643z"
        fill="url(#filletA)"
      />
      <path
        d="M381 583.500L596.700 532.300C615 535 631 575 631 608Q631 640 616.700 643.500L404 694z"
        fill="url(#shaftA)"
      />
      <ellipse cx="392.500" cy="638.500" rx="23" ry="56.500" transform="rotate(-11.700 392.500 638.500)" fill="#363636" />
    </g>
    <g strokeWidth="4">
      <path d="M293 643V622" stroke="#176b1d" />
      <path d="M293 611L298 625H288z" fill="#229b2b" />
      <path d="M293 643L273 648" stroke="#1c1c9a" />
      <path d="M263 650L273 643L276 652z" fill="#3434d4" />
      <path d="M293 643L303 651" stroke="#8a1717" />
      <path d="M311 656L300 657L306 647z" fill="#d12424" />
    </g>
    <g fontSize="12" fontFamily="Open Sans" textAnchor="middle">
      <text x="292" y="610" fill="#5c9460">Y</text>
      <text x="310" y="661" fill="#cc4747">X</text>
      <text x="259" y="655" fill="#5656b4">Z</text>
    </g>
  </svg>
);

const Chevron = ({ d }) => (
  <svg width="10" height="10" viewBox="0 0 10 10" aria-hidden="true">
    <path d={d} fill="none" stroke="#555" strokeWidth="2" />
  </svg>
);

const App = () => {
  return (
    <Window>
      <GlobalStyle />
      <TitleBar>
        <Logo href="#home">
          <svg width="29" height="27" viewBox="0 0 29 27" fill="none" stroke="#d3292f" aria-hidden="true">
            <path d="M10 2Q20 0 19 4Q17 7 11 9" strokeWidth="2" />
            <path d="M9 11Q18 9 16 16Q12 24 1 25Q5 20 9 14" strokeWidth="2.200" />
            <path d="M27 10Q19 9 19 13Q19 15 22.500 17Q26 20 23 22.500Q21 24 15 23.500" strokeWidth="2.600" />
          </svg>
          <LogoText>
            <b>SOLID</b>WORKS
          </LogoText>
        </Logo>
        <MenuArrow aria-label="Show menu">
          <svg width="5" height="10" viewBox="0 0 5 10">
            <path d="M0 0L5 5L0 10z" fill="#333" />
          </svg>
        </MenuArrow>
        <QuickTools>
          <ToolButton $space={5} aria-label="Home">
            <Icon name="homeAlert" size={22} />
          </ToolButton>
          {quickTools.map(([icon, label]) => (
            <React.Fragment key={icon}>
              <ToolButton aria-label={label}>
                <Icon name={icon} size={22} />
              </ToolButton>
              <ArrowButton aria-label={`${label} options`}>
                <Caret />
              </ArrowButton>
            </React.Fragment>
          ))}
          <SelectTool>
            <ToolButton aria-label="Select">
              <Icon name="cursor" />
            </ToolButton>
            <ArrowButton aria-label="Select options">
              <Caret />
            </ArrowButton>
          </SelectTool>
          <ToolButton $space={5} aria-label="Rebuild">
            <Icon name="signal" />
          </ToolButton>
          <ToolButton $space={5} aria-label="File properties">
            <Icon name="options" size={22} />
          </ToolButton>
          <ToolButton aria-label="Options">
            <Icon name="gear" size={22} />
          </ToolButton>
          <ArrowButton aria-label="More options">
            <Caret />
          </ArrowButton>
        </QuickTools>
        <DocTitle>Crank shaft *</DocTitle>
        <Search>
          <Icon name="terminal" size={18} />
          <input type="text" placeholder="Search Commands" aria-label="Search Commands" />
          <Icon name="search" size={22} />
          <ArrowButton aria-label="Search options">
            <Caret color="#111" />
          </ArrowButton>
        </Search>
        <WindowControls>
          <ControlButton aria-label="Login">
            <Icon name="user" />
          </ControlButton>
          <ControlButton aria-label="Help">?</ControlButton>
          <ControlButton $width={10} aria-label="Help options">
            <Caret />
          </ControlButton>
          <ControlButton aria-label="Minimize">
            <Icon name="minimize" />
          </ControlButton>
          <ControlButton aria-label="Maximize">
            <Icon name="maximize" />
          </ControlButton>
          <ControlButton aria-label="Close">
            <Icon name="close" />
          </ControlButton>
        </WindowControls>
      </TitleBar>

      <Ribbon>
        <RibbonGroup $indent={4}>
          <Big icon="boss" width={65}>{"Extruded\nBoss/Base"}</Big>
          <Big icon="revolve" width={65}>{"Revolved\nBoss/Base"}</Big>
          <Small
            width={154}
            indent={2}
            items={[
              ["sweep", "Swept Boss/Base"],
              ["loft", "Lofted Boss/Base"],
              ["boundary", "Boundary Boss/Base"],
            ]}
          />
        </RibbonGroup>
        <RibbonGroup $indent={3}>
          <Big icon="extrudeCut" width={54}>{"Extruded\nCut"}</Big>
          <Big icon="hole" width={52} menu>{"Hole\nWizard"}</Big>
          <Big icon="revolveCut" width={52}>{"Revolved\nCut"}</Big>
          <Small
            width={121}
            indent={7}
            items={[
              ["sweepCut", "Swept Cut"],
              ["loftCut", "Lofted Cut"],
              ["boundaryCut", "Boundary Cut"],
            ]}
          />
        </RibbonGroup>
        <RibbonGroup>
          <Big icon="fillet" width={34} menu>Fillet</Big>
          <Big icon="pattern" width={48} menu>{"Linear\nPattern"}</Big>
          <Small
            width={67}
            indent={4}
            items={[
              ["rib", "Rib"],
              ["draft", "Draft"],
              ["shell", "Shell"],
            ]}
          />
          <Small
            width={88}
            indent={3}
            items={[
              ["wrap", "Wrap"],
              ["intersect", "Intersect"],
              ["mirror", "Mirror"],
            ]}
          />
        </RibbonGroup>
        <RibbonGroup>
          <Big icon="reference" width={65} menu>{"Reference\nGeometry"}</Big>
          <Big icon="curves" width={46} menu>Curves</Big>
        </RibbonGroup>
        <RibbonGroup>
          <Big icon="instant" width={64}>Instant3D</Big>
        </RibbonGroup>
        <RibbonGroup $last>
          <Big icon="move" width={76}>{"Move/Copy\nBodies"}</Big>
        </RibbonGroup>
      </Ribbon>

      <TabRow>
        {tabs.map(([text, width]) => (
          <Tab key={text} $width={width} $active={text === "Features"}>
            {text}
          </Tab>
        ))}
        <DocControls>
          {docTools.map(([icon, label]) => (
            <ToolButton key={icon} aria-label={label}>
              <Icon name={icon} size={22} />
            </ToolButton>
          ))}
        </DocControls>
      </TabRow>

      <Work>
        <Panel>
          <Grip>
            <Dot />
          </Grip>
          <PanelTabs>
            {["part", "property", "config", "target", "darkBall"].map((icon) => (
              <PanelTab key={icon} $active={icon === "part"} aria-label={icon}>
                <Icon name={icon} size={22} />
              </PanelTab>
            ))}
          </PanelTabs>
          <Filter>
            <Icon name="funnel" size={22} />
            <input type="text" aria-label="Filter" />
          </Filter>
          <TreeArea>
            <Tree>
              {treeItems.map((item) => (
                <TreeRow key={item.text} $level={item.level}>
                  {item.level === 1 && (
                    <Expander $hidden={!item.toggle} aria-label={`Toggle ${item.text}`}>
                      <svg width="10" height="10" viewBox="0 0 10 10">
                        <path d={item.toggle === "open" ? "M0 3H9L5 7z" : "M3 0L8 4L3 9z"} fill="#666" />
                      </svg>
                    </Expander>
                  )}
                  <Icon name={item.icon} size={item.level === 1 ? 22 : 20} />
                  {item.text}
                </TreeRow>
              ))}
            </Tree>
            <VScroll>
              <button aria-label="Scroll up">
                <Chevron d="M1 7L5 3L9 7" />
              </button>
              <VThumb />
              <button aria-label="Scroll down">
                <Chevron d="M1 3L5 7L9 3" />
              </button>
            </VScroll>
          </TreeArea>
          <HScroll>
            <button aria-label="Scroll left">
              <Chevron d="M7 1L3 5L7 9" />
            </button>
            <HThumb />
            <button aria-label="Scroll right">
              <Chevron d="M3 1L7 5L3 9" />
            </button>
          </HScroll>
          <PanelHandle aria-label="Collapse panel">
            <Dot />
          </PanelHandle>
        </Panel>
        <Viewport>
          <Model />
          <HeadsUp>
            {viewTools.map(([icon, label, menu]) => (
              <React.Fragment key={icon}>
                <ToolButton $space={menu ? 0 : 5} aria-label={label}>
                  <Icon name={icon} size={22} />
                </ToolButton>
                {menu && (
                  <ArrowButton aria-label={`${label} options`}>
                    <Caret color="#8c8c8c" />
                  </ArrowButton>
                )}
              </React.Fragment>
            ))}
          </HeadsUp>
          <TaskPane>
            {taskTools.map(([icon, label]) => (
              <TaskButton key={icon} $active={icon === "ball"} aria-label={label}>
                <Icon name={icon} />
              </TaskButton>
            ))}
          </TaskPane>
        </Viewport>
      </Work>

      <BottomBar>
        <NavButtons>
          {["M4 1V9M9 1L5 5L9 9z", "M7 1L3 5L7 9z", "M3 1L7 5L3 9z", "M6 1V9M1 1L5 5L1 9z"].map((d) => (
            <button key={d} aria-label="Scroll tabs">
              <svg width="10" height="10" viewBox="0 0 10 10">
                <path d={d} fill="#7c7ca2" stroke="#7c7ca2" />
              </svg>
            </button>
          ))}
        </NavButtons>
        <SheetTab $width={67} $active>Model</SheetTab>
        <SheetTab $width={78}>3D Views</SheetTab>
        <SheetTab $width={128}>Motion Study 1</SheetTab>
      </BottomBar>
    </Window>
  );
};

export default App;
